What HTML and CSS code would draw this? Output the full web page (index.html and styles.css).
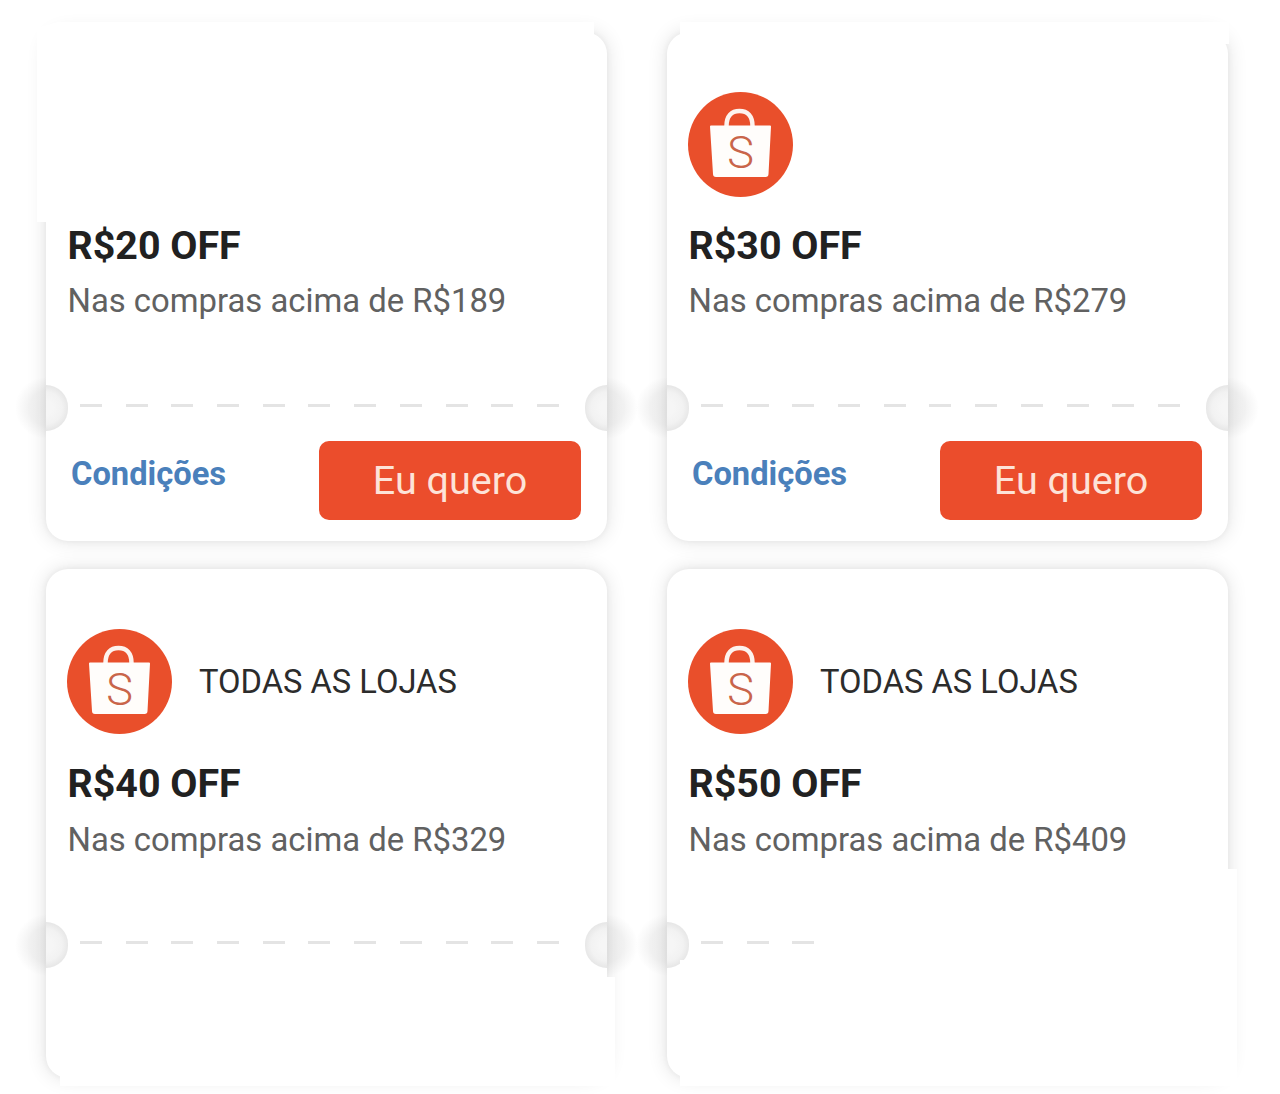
FILE: index.html
```html
<!doctype html>
<html lang="pt-BR">
    <head>
        <meta charset="utf-8">
        <meta name="viewport" content="width=device-width, initial-scale=1">
        <title>Cupons</title>
        <link rel="stylesheet" href="styles.css">
    </head>
    <body>
        <div class="coupons">
            <div class="coupon">
                <div class="coupon-body">
                    <div class="coupon-head"></div>
                    <h2>R$20 OFF</h2>
                    <p>Nas compras acima de R$189</p>
                </div>
                <div class="coupon-foot">
                    <a class="terms" href="#">Condições</a>
                    <button type="button">Eu quero</button>
                </div>
            </div>

            <div class="coupon">
                <div class="coupon-body">
                    <div class="coupon-head">
                        <svg class="logo" viewBox="0 0 105 105" aria-hidden="true">
                            <circle cx="52.5" cy="52.5" r="52.5" fill="#e94f2b" />
                            <path d="M38.500 34c0-10 5-15 13-15s13 5 13 15" fill="none" stroke="#fdf3ee" stroke-width="4.500" />
                            <path d="M23 33.500h59a1 1 0 0 1 1 1l-2.500 47.500a3 3 0 0 1-3 3H28a3 3 0 0 1-3-3L22 34.500a1 1 0 0 1 1-1z" fill="#fffdfb" />
                            <text x="52.500" y="76" text-anchor="middle" class="logo-s">S</text>
                        </svg>
                    </div>
                    <h2>R$30 OFF</h2>
                    <p>Nas compras acima de R$279</p>
                </div>
                <div class="coupon-foot">
                    <a class="terms" href="#">Condições</a>
                    <button type="button">Eu quero</button>
                </div>
            </div>

            <div class="coupon coupon-low">
                <div class="coupon-body">
                    <div class="coupon-head">
                        <svg class="logo" viewBox="0 0 105 105" aria-hidden="true">
                            <circle cx="52.5" cy="52.5" r="52.5" fill="#e94f2b" />
                            <path d="M38.500 34c0-10 5-15 13-15s13 5 13 15" fill="none" stroke="#fdf3ee" stroke-width="4.500" />
                            <path d="M23 33.500h59a1 1 0 0 1 1 1l-2.500 47.500a3 3 0 0 1-3 3H28a3 3 0 0 1-3-3L22 34.500a1 1 0 0 1 1-1z" fill="#fffdfb" />
                            <text x="52.500" y="76" text-anchor="middle" class="logo-s">S</text>
                        </svg>
                        <span class="scope">TODAS AS LOJAS</span>
                    </div>
                    <h2>R$40 OFF</h2>
                    <p>Nas compras acima de R$329</p>
                </div>
                <div class="coupon-foot"></div>
            </div>

            <div class="coupon coupon-low coupon-cut">
                <div class="coupon-body">
                    <div class="coupon-head">
                        <svg class="logo" viewBox="0 0 105 105" aria-hidden="true">
                            <circle cx="52.5" cy="52.5" r="52.5" fill="#e94f2b" />
                            <path d="M38.500 34c0-10 5-15 13-15s13 5 13 15" fill="none" stroke="#fdf3ee" stroke-width="4.500" />
                            <path d="M23 33.500h59a1 1 0 0 1 1 1l-2.500 47.500a3 3 0 0 1-3 3H28a3 3 0 0 1-3-3L22 34.500a1 1 0 0 1 1-1z" fill="#fffdfb" />
                            <text x="52.500" y="76" text-anchor="middle" class="logo-s">S</text>
                        </svg>
                        <span class="scope">TODAS AS LOJAS</span>
                    </div>
                    <h2>R$50 OFF</h2>
                    <p>Nas compras acima de R$409</p>
                </div>
                <div class="coupon-foot"></div>
            </div>

            <!-- white blocks painted over the original picture -->
            <div class="patch patch-a"></div>
            <div class="patch patch-b"></div>
            <div class="patch patch-c"></div>
            <div class="patch patch-d"></div>
            <div class="patch patch-e"></div>
        </div>
    </body>
</html>
```

FILE: styles.css
```css
* {
    margin: 0;
    padding: 0;
    box-sizing: border-box;
}

body {
    background: #fff;
    font-family: Roboto, sans-serif;
}

.coupons {
    position: relative;
    display: grid;
    grid-template-columns: 561px 561px;
    grid-auto-rows: 509px;
    column-gap: 60px;
    row-gap: 28px;
    padding: 32px 0 16px 46px;
    height: 1094px;
    overflow: hidden;
}

.coupon {
    position: relative;
    display: flex;
    flex-direction: column;
    background: #fff;
    border-radius: 22px;
    box-shadow: 0 0 20px rgba(0, 0, 0, 0.12), 0 0 6px rgba(0, 0, 0, 0.05);
}

.coupon-body {
    position: relative;
    height: 375px;
    padding: 60px 21px 0 22px;
}

/* the dashed tear line */
.coupon-body::after {
    content: "";
    position: absolute;
    left: 34px;
    bottom: 0;
    width: 482px;
    height: 3px;
    background: repeating-linear-gradient(90deg, #e4e4e4 0 22px, transparent 22px 45.700px);
}

/* the two bites in the ticket edge, inside half */
.coupon::before,
.coupon::after {
    content: "";
    position: absolute;
    top: 353px;
    width: 22px;
    height: 46px;
    z-index: 1;
}

.coupon::before {
    left: 0;
    border-radius: 0 23px 23px 0;
    background: radial-gradient(circle 23px at 0 50%, #f6f6f6 30%, #f2f2f2 70%, #e6e6e6 100%);
}

.coupon::after {
    right: 0;
    border-radius: 23px 0 0 23px;
    background: radial-gradient(circle 23px at 100% 50%, #f6f6f6 30%, #f2f2f2 70%, #e6e6e6 100%);
}

/* soft bulge of the shadow outside the bites, behind the card */
.coupon-foot::before,
.coupon-foot::after {
    content: "";
    position: absolute;
    top: 345px;
    width: 62px;
    height: 62px;
    border-radius: 50%;
    background: radial-gradient(circle closest-side, #f0f0f0 0, #f2f2f2 55%, rgba(245, 245, 245, 0) 100%);
    z-index: -1;
}

.coupon-foot::before {
    left: -31px;
}

.coupon-foot::after {
    right: -31px;
}

.coupon-cut .coupon-foot::after {
    display: none;
}

.coupon-head {
    display: flex;
    align-items: center;
    gap: 27px;
    height: 105px;
    margin-left: -1px;
}

.logo {
    width: 105px;
    height: 105px;
    flex: none;
}

.logo-s {
    font-family: Roboto, sans-serif;
    font-weight: 300;
    font-size: 45px;
    fill: #c9654a;
}

.scope {
    font-size: 32.700px;
    color: #2c2c2c;
}

h2 {
    margin-top: 27px;
    margin-left: -0.500px;
    font-size: 39.400px;
    line-height: 44px;
    font-weight: 700;
    color: #212121;
}

p {
    margin-top: 11px;
    margin-left: -0.500px;
    font-size: 32.850px;
    line-height: 44px;
    color: #616161;
}

.coupon-low h2 {
    margin-top: 28px;
}

.coupon-low p {
    margin-top: 12px;
}

.coupon-foot {
    flex: 1;
    display: flex;
    justify-content: space-between;
    align-items: flex-start;
    padding: 34px 26px 0 25px;
}

.terms {
    margin-top: 14px;
    font-size: 32.700px;
    line-height: 38px;
    font-weight: 700;
    color: #4a80bb;
    text-decoration: none;
}

button {
    width: 262px;
    height: 79px;
    border: 0;
    border-radius: 10px;
    background: #eb4d2c;
    color: #fde3d8;
    font-family: Roboto, sans-serif;
    font-size: 39.500px;
}

.patch {
    position: absolute;
    background: #fff;
    z-index: 2;
}

.patch-a {
    left: 37px;
    top: 22px;
    width: 557px;
    height: 200px;
    clip-path: polygon(21px 0, 100% 0, 100% 100%, 0 100%, 0 6px);
}

.patch-b {
    left: 680px;
    top: 22px;
    width: 549px;
    height: 22px;
}

.patch-c {
    left: 60px;
    top: 977px;
    width: 555px;
    height: 109px;
}

.patch-d {
    left: 820px;
    top: 869px;
    width: 417px;
    height: 217px;
}

.patch-e {
    left: 680px;
    top: 960px;
    width: 557px;
    height: 126px;
}
```
